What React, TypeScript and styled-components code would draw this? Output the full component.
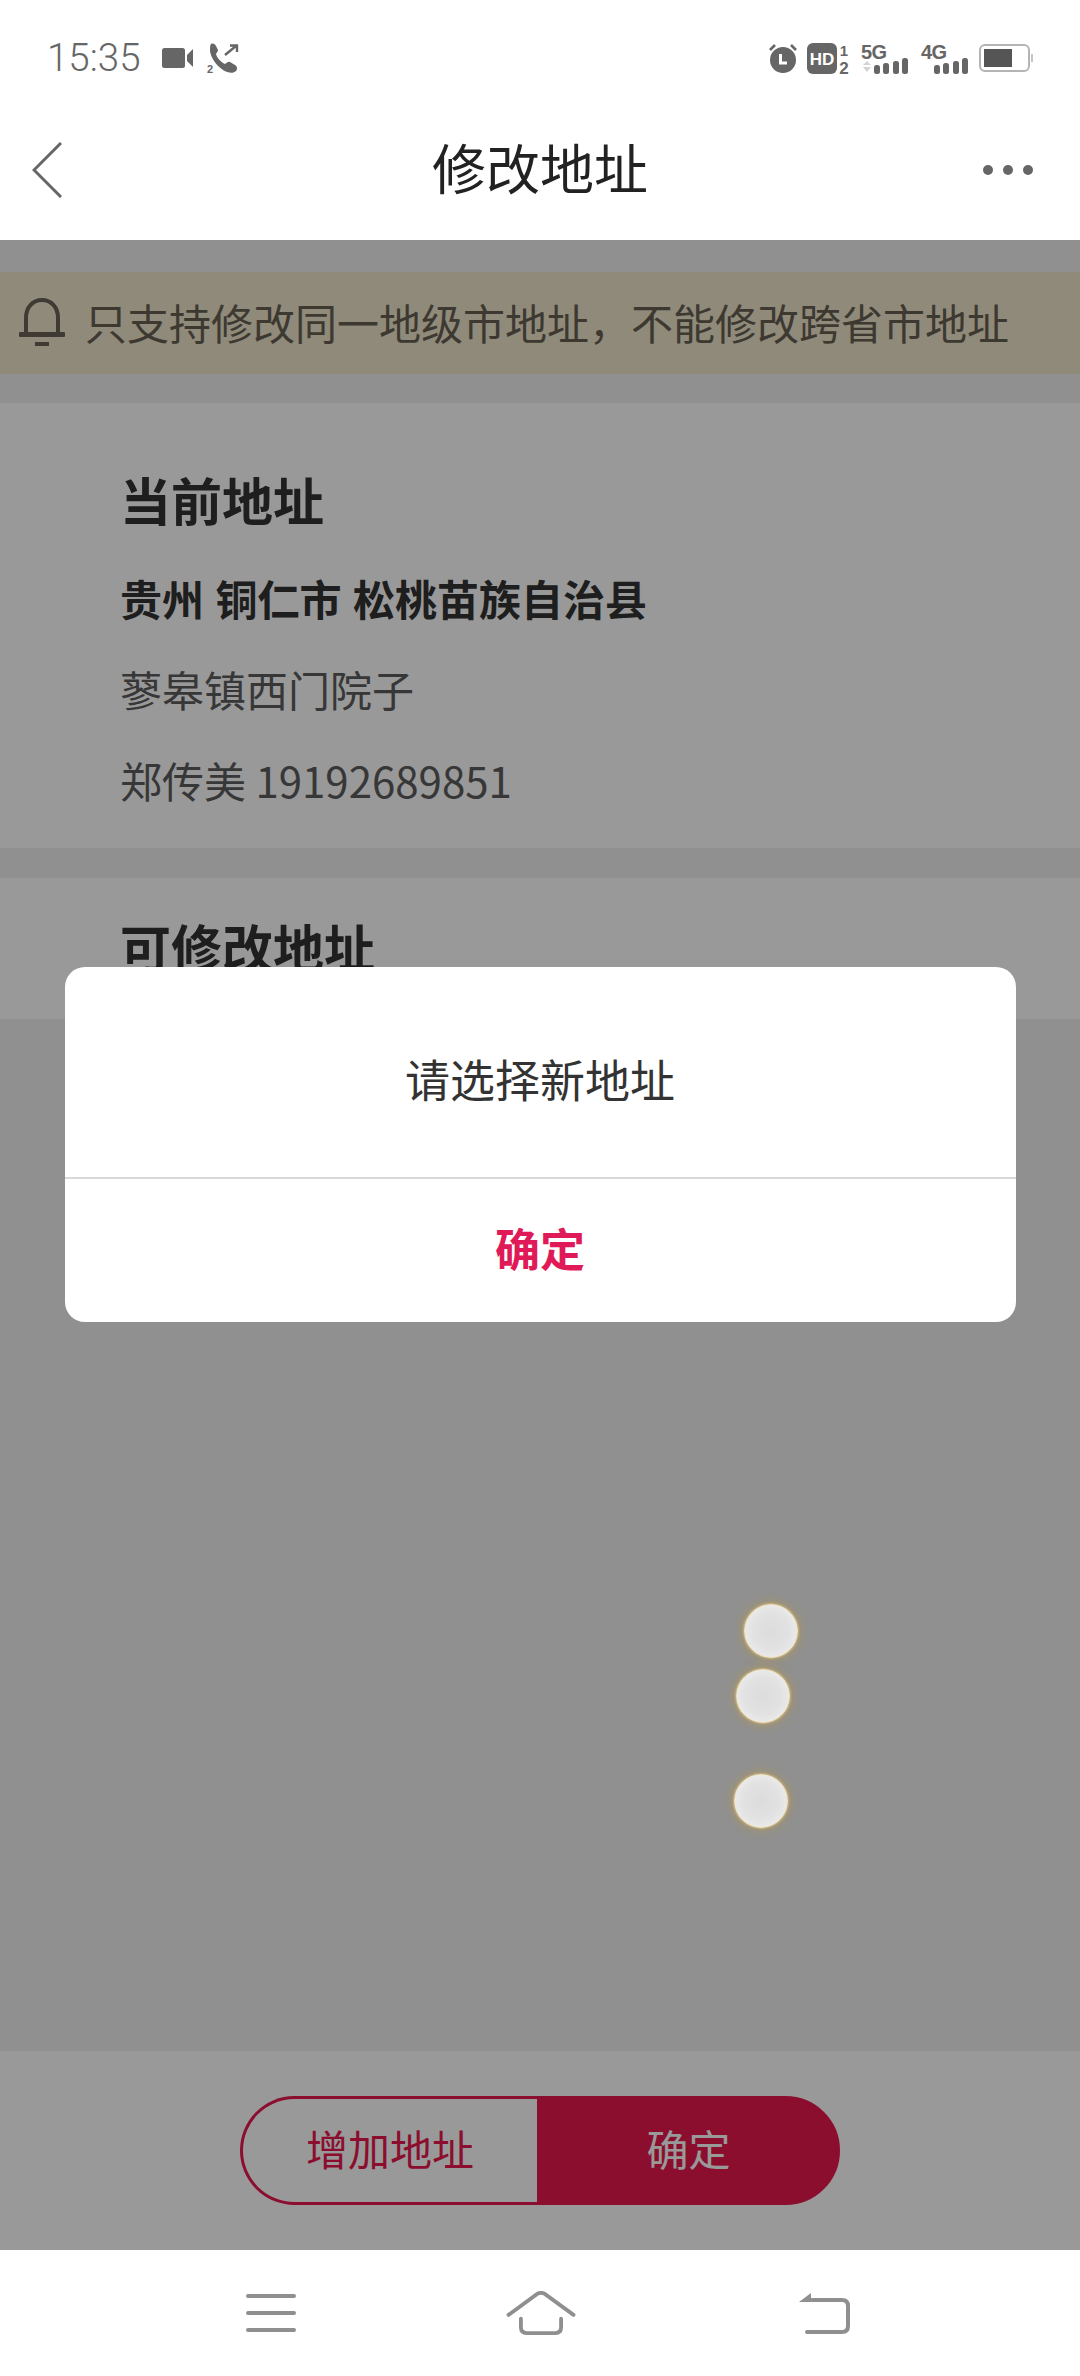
import React from "react";
import styled, { createGlobalStyle } from "styled-components";

const GlobalStyle = createGlobalStyle`
    html, body {
        margin: 0;
        padding: 0;
        background: #fff;
    }
    body {
        font-family: "Noto Sans CJK SC", "Noto Sans", sans-serif;
    }
`;

const Page = styled.div`
    width: 1080px;
    height: 2376px;
    display: flex;
    flex-direction: column;
    overflow: hidden;
    background: #fff;
`;

const StatusBar = styled.div`
    height: 100px;
    box-sizing: border-box;
    padding: 16px 47px 0 47px;
    display: flex;
    align-items: center;
    justify-content: space-between;
`;

const StatusGroup = styled.div`
    display: flex;
    align-items: center;
`;

const Clock = styled.span`
    font-family: "Roboto", "Liberation Sans", sans-serif;
    font-weight: 300;
    font-size: 38.5px;
    line-height: 44px;
    color: #666;
    margin-right: 21px;
`;

const IconSlot = styled.svg<{ $gap?: number }>`
    display: block;
    overflow: visible;
    margin-right: ${(p) => p.$gap ?? 0}px;
`;

const NavBar = styled.div`
    height: 140px;
    padding: 0 47px;
    display: grid;
    grid-template-columns: 1fr auto 1fr;
    align-items: center;
`;

const BackIcon = styled.svg`
    display: block;
    margin-left: -15px;
`;

const NavAction = styled.svg`
    display: block;
    justify-self: end;
`;

const NavTitle = styled.h1`
    margin: 0 0 6px;
    font-size: 54px;
    font-weight: 400;
    color: #222;
    line-height: 70px;
`;

const Main = styled.div`
    position: relative;
    flex: 1;
    display: flex;
    flex-direction: column;
    padding-top: 32px;
    background: #f0f0f0;
`;

const Notice = styled.div`
    height: 102px;
    box-sizing: border-box;
    padding: 0 0 2px 19px;
    display: flex;
    align-items: center;
    gap: 20px;
    background: #eee6cb;
    color: #675f52;
    font-size: 42px;
    line-height: 58px;
    white-space: nowrap;
`;

const Section = styled.section<{ $top: number; $height: number; $gap: number }>`
    height: ${(p) => p.$height}px;
    box-sizing: border-box;
    margin-top: ${(p) => p.$gap}px;
    padding: ${(p) => p.$top}px 0 0 120px;
    background: #fff;
    overflow: hidden;
`;

const SectionTitle = styled.h2`
    margin: 0;
    font-size: 51px;
    font-weight: 700;
    line-height: 60px;
    color: #333;
`;

const RegionLine = styled.div`
    margin-top: 39px;
    font-size: 42px;
    font-weight: 700;
    line-height: 60px;
    word-spacing: 2px;
    color: #333;
`;

const DetailLine = styled.div`
    margin-top: 31px;
    font-size: 42px;
    line-height: 60px;
    color: #5c5c5c;
`;

const BottomBar = styled.div`
    margin-top: auto;
    height: 199px;
    box-sizing: border-box;
    padding-top: 45px;
    display: flex;
    justify-content: center;
    align-items: flex-start;
    background: #fff;
`;

const PillButton = styled.button<{ $solid?: boolean }>`
    height: 109px;
    width: ${(p) => (p.$solid ? 303 : 297)}px;
    box-sizing: border-box;
    border: 3px solid #e8184e;
    border-right-width: ${(p) => (p.$solid ? 3 : 0)}px;
    border-radius: ${(p) => (p.$solid ? "0 55px 55px 0" : "55px 0 0 55px")};
    background: ${(p) => (p.$solid ? "#e8184e" : "#fff")};
    color: ${(p) => (p.$solid ? "#fff" : "#e8184e")};
    font-family: inherit;
    font-size: 42px;
    line-height: 60px;
    padding: 0 0 6px;
`;

const Dimmer = styled.div`
    position: absolute;
    inset: 0;
    display: flex;
    justify-content: center;
    align-items: flex-start;
    padding-top: 727px;
    background: rgba(0, 0, 0, 0.4);
`;

const Dialog = styled.div`
    width: 951px;
    height: 355px;
    border-radius: 20px;
    background: #fff;
    display: flex;
    flex-direction: column;
    overflow: hidden;
`;

const DialogMessage = styled.div`
    height: 212px;
    display: flex;
    align-items: center;
    justify-content: center;
    border-bottom: 2px solid #d8d8d8;
    box-sizing: border-box;
    font-size: 45px;
    color: #333;
    padding-top: 12px;
`;

const DialogAction = styled.div`
    flex: 1;
    display: flex;
    align-items: center;
    justify-content: center;
    font-size: 45px;
    font-weight: 700;
    color: #e01a58;
    padding-bottom: 6px;
`;

const TouchDot = styled.div<{ $x: number; $y: number }>`
    position: absolute;
    left: ${(p) => p.$x - 27}px;
    top: ${(p) => p.$y - 267}px;
    width: 54px;
    height: 54px;
    border-radius: 50%;
    background: radial-gradient(circle, #dcdcdc 0%, #e2e2e2 50%, #f1f1f1 92%);
    border: 1px solid #f3e3bb;
    box-sizing: border-box;
    box-shadow: 0 0 2px 1px #cdb47c, 0 0 7px 5px rgba(165, 148, 105, 0.6);
`;

const SystemNav = styled.div`
    height: 126px;
    display: flex;
    align-items: center;
    background: #fff;
    padding-left: 246px;
    box-sizing: border-box;
`;

const HomeIcon = styled.svg`
    display: block;
    margin: 0 222px 0 210px;
`;

const touches = [
    { x: 771, y: 1631 },
    { x: 763, y: 1696 },
    { x: 761, y: 1801 },
];

const StatusIcons = () => (
    <StatusGroup>
        {/* alarm */}
        <IconSlot width="30" height="30" viewBox="0 0 30 30" $gap={9}>
            <circle cx="15" cy="17" r="13" fill="#666" />
            <path d="M2 7 L7 2 M28 7 L23 2" stroke="#666" strokeWidth="2.6" />
            <path d="M12.5 11 V20 H19" fill="none" stroke="#fff" strokeWidth="3" />
        </IconSlot>
        {/* HD sim */}
        <IconSlot width="44" height="31" viewBox="0 0 44 31" $gap={10}>
            <rect x="0" y="0" width="30" height="31" rx="6" fill="#666" />
            <text x="15" y="21.5" textAnchor="middle" fontFamily="Liberation Sans" fontSize="17" fontWeight="700" fill="#fff">
                HD
            </text>
            <text x="37" y="13" textAnchor="middle" fontFamily="Liberation Sans" fontSize="15" fontWeight="700" fill="#666">
                1
            </text>
            <text x="37" y="30.5" textAnchor="middle" fontFamily="Liberation Sans" fontSize="17" fontWeight="700" fill="#666">
                2
            </text>
        </IconSlot>
        {/* 5G signal */}
        <IconSlot width="48" height="31" viewBox="0 0 48 31" $gap={12}>
            <text x="0" y="16" fontFamily="Liberation Sans" fontSize="20" fontWeight="700" letterSpacing="-0.5" fill="#666">
                5G
            </text>
            <path d="M2 22 L6 18 L10 22 Z M2 24 L10 24 L6 29 Z" fill="#d4d4d4" />
            <rect x="13" y="22" width="6" height="9" rx="2.5" fill="#666" />
            <rect x="22" y="20" width="6" height="11" rx="2.5" fill="#666" />
            <rect x="32" y="18" width="6" height="13" rx="2.5" fill="#666" />
            <rect x="41" y="15" width="6" height="16" rx="2.5" fill="#666" />
        </IconSlot>
        {/* 4G signal */}
        <IconSlot width="48" height="31" viewBox="0 0 48 31" $gap={10}>
            <text x="0" y="16" fontFamily="Liberation Sans" fontSize="20" fontWeight="700" letterSpacing="-0.5" fill="#666">
                4G
            </text>
            <rect x="13" y="22" width="6" height="9" rx="2.5" fill="#666" />
            <rect x="22" y="20" width="6" height="11" rx="2.5" fill="#666" />
            <rect x="32" y="18" width="6" height="13" rx="2.5" fill="#666" />
            <rect x="41" y="15" width="6" height="16" rx="2.5" fill="#666" />
        </IconSlot>
        {/* battery */}
        <IconSlot width="54" height="28" viewBox="0 0 54 28">
            <rect x="1" y="1" width="49" height="26" rx="5" fill="none" stroke="#b4b4b4" strokeWidth="2" />
            <rect x="5" y="5" width="28" height="18" fill="#555" />
            <rect x="52" y="10" width="2" height="8" fill="#c4c4c4" />
        </IconSlot>
    </StatusGroup>
);

export default function App() {
    return (
        <Page>
            <GlobalStyle />
            <StatusBar>
                <StatusGroup>
                    <Clock>15:35</Clock>
                    <IconSlot width="31" height="20" viewBox="0 0 31 20" $gap={14}>
                        <rect x="0" y="0" width="23" height="20" rx="2.5" fill="#666" />
                        <path d="M25 7 L31 1 V19 L25 13 Z" fill="#666" />
                    </IconSlot>
                    <IconSlot width="32" height="31" viewBox="0 0 32 31">
                        <path
                            d="M4 1 C6 0 8 1 9 3 L11 7 C11 9 9 10 9 11 C10 15 14 19 18 21 C19 21 21 18 23 19 L28 22 C30 23 31 26 29 28 C26 31 21 30 16 27 C9 22 4 15 3 8 C3 5 3 2 4 1 Z"
                            fill="#666"
                        />
                        <path d="M18 12 L29 3 M23 2.5 H30 V9" fill="none" stroke="#666" strokeWidth="2.4" />
                        <text x="0" y="30" fontFamily="Liberation Sans" fontSize="11" fontWeight="700" fill="#666">
                            2
                        </text>
                    </IconSlot>
                </StatusGroup>
                <StatusIcons />
            </StatusBar>

            <NavBar>
                <BackIcon width="30" height="56" viewBox="0 0 30 56">
                    <path d="M29 1 L2 28 L29 55" fill="none" stroke="#666" strokeWidth="3" />
                </BackIcon>
                <NavTitle>修改地址</NavTitle>
                <NavAction width="50" height="12" viewBox="0 0 50 12">
                    <circle cx="5" cy="6" r="5" fill="#666" />
                    <circle cx="25" cy="6" r="5" fill="#666" />
                    <circle cx="45" cy="6" r="5" fill="#666" />
                </NavAction>
            </NavBar>

            <Main>
                <Notice>
                    <svg width="46" height="48" viewBox="0 0 46 48">
                        <path
                            d="M7 36 V20 C7 9 14 2 23 2 C32 2 39 9 39 20 V36"
                            fill="none"
                            stroke="#6a6258"
                            strokeWidth="4"
                        />
                        <rect x="0" y="34" width="46" height="5" rx="1" fill="#6a6258" />
                        <rect x="16" y="44" width="14" height="4" fill="#6a6258" />
                    </svg>
                    只支持修改同一地级市地址，不能修改跨省市地址
                </Notice>

                <Section $top={66} $height={445} $gap={29}>
                    <SectionTitle>当前地址</SectionTitle>
                    <RegionLine>贵州 铜仁市 松桃苗族自治县</RegionLine>
                    <DetailLine>蓼皋镇西门院子</DetailLine>
                    <DetailLine>郑传美 19192689851</DetailLine>
                </Section>

                <Section $top={38} $height={141} $gap={30}>
                    <SectionTitle>可修改地址</SectionTitle>
                </Section>

                <BottomBar>
                    <PillButton>增加地址</PillButton>
                    <PillButton $solid>确定</PillButton>
                </BottomBar>

                <Dimmer>
                    <Dialog>
                        <DialogMessage>请选择新地址</DialogMessage>
                        <DialogAction>确定</DialogAction>
                    </Dialog>
                </Dimmer>

                {touches.map((t) => (
                    <TouchDot key={t.y} $x={t.x} $y={t.y} />
                ))}
            </Main>

            <SystemNav>
                <svg width="50" height="40" viewBox="0 0 50 40">
                    <path d="M2 3 H48 M2 20 H48 M2 37 H48" stroke="#8f8f8f" strokeWidth="4" strokeLinecap="round" />
                </svg>
                <HomeIcon width="70" height="44" viewBox="0 0 72 46">
                    <path
                        d="M2 25 L32 3 Q36 1 40 3 L70 25 M15 29 V38 Q15 44 21 44 H51 Q57 44 57 38 V29"
                        fill="none"
                        stroke="#8f8f8f"
                        strokeWidth="4"
                        strokeLinecap="round"
                    />
                </HomeIcon>
                <svg width="52" height="42" viewBox="0 0 52 42">
                    <path
                        d="M14 8 H44 Q50 8 50 14 V34 Q50 40 44 40 H9"
                        fill="none"
                        stroke="#8f8f8f"
                        strokeWidth="4"
                        strokeLinecap="round"
                    />
                    <path d="M13 1 V10 H1 Z" fill="#8f8f8f" />
                </svg>
            </SystemNav>
        </Page>
    );
}
